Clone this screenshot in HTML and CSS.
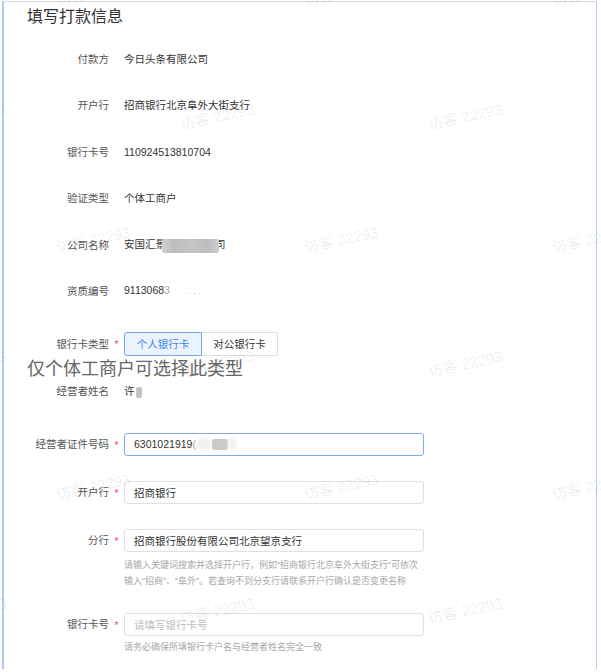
FILE: index.html
```html
<!DOCTYPE html>
<html lang="zh">
<head>
<meta charset="utf-8">
<title>填写打款信息</title>
<link rel="stylesheet" href="styles.css">
</head>
<body>
<div class="frame">
  <h1 class="title">填写打款信息</h1>
  <div class="info">
    <div class="row"><span class="label">付款方</span><span class="mark"></span><span class="value">今日头条有限公司</span></div>
    <div class="row"><span class="label">开户行</span><span class="mark"></span><span class="value">招商银行北京阜外大街支行</span></div>
    <div class="row"><span class="label">银行卡号</span><span class="mark"></span><span class="value">110924513810704</span></div>
    <div class="row"><span class="label">验证类型</span><span class="mark"></span><span class="value">个体工商户</span></div>
    <div class="row"><span class="label">公司名称</span><span class="mark"></span><span class="value">安国汇景<span class="redact r-company"></span>司</span></div>
    <div class="row"><span class="label">资质编号</span><span class="mark"></span><span class="value">9113068<span class="fade">3</span><span class="dots">. . .</span></span></div>
  </div>
  <div class="row type-row">
    <span class="label">银行卡类型</span><span class="mark">*</span>
    <div class="seg"><span class="seg-btn on">个人银行卡</span><span class="seg-btn off">对公银行卡</span></div>
  </div>
  <div class="tip">仅个体工商户可选择此类型</div>
  <div class="row name-row"><span class="label">经营者姓名</span><span class="mark"></span><span class="value">许<span class="redact r-name"></span></span></div>
  <div class="row field f1"><span class="label">经营者证件号码</span><span class="mark">*</span><div class="input focus">6301021919<span class="fade">(</span><span class="haze"></span><span class="redact r-id"></span><span class="haze small"></span></div></div>
  <div class="row field f2"><span class="label">开户行</span><span class="mark">*</span><div class="input">招商银行</div></div>
  <div class="row field f3"><span class="label">分行</span><span class="mark">*</span><div class="input">招商银行股份有限公司北京望京支行</div></div>
  <div class="row hint-row h1"><span></span><span></span><div class="hint">请输入关键词搜索并选择开户行，例如“招商银行北京阜外大街支行”可依次<br>输入“招商”、“阜外”。若查询不到分支行请联系开户行确认是否变更名称</div></div>
  <div class="row field f4"><span class="label">银行卡号</span><span class="mark">*</span><div class="input"><span class="placeholder">请填写银行卡号</span></div></div>
  <div class="row hint-row h2"><span></span><span></span><div class="hint">请务必确保所填银行卡户名与经营者姓名完全一致</div></div>
</div>
<div class="wm-layer" aria-hidden="true">
  <div class="wm-row"><span class="wm">访客 22293</span><span class="wm">访客 22293</span><span class="wm">访客 22293</span><span class="wm">访客 22293</span></div>
  <div class="wm-row"><span class="wm">访客 22293</span><span class="wm">访客 22293</span><span class="wm">访客 22293</span><span class="wm">访客 22293</span></div>
  <div class="wm-row"><span class="wm">访客 22293</span><span class="wm">访客 22293</span><span class="wm">访客 22293</span><span class="wm">访客 22293</span></div>
  <div class="wm-row"><span class="wm">访客 22293</span><span class="wm">访客 22293</span><span class="wm">访客 22293</span><span class="wm">访客 22293</span></div>
  <div class="wm-row"><span class="wm">访客 22293</span><span class="wm">访客 22293</span><span class="wm">访客 22293</span><span class="wm">访客 22293</span></div>
  <div class="wm-row"><span class="wm">访客 22293</span><span class="wm">访客 22293</span><span class="wm">访客 22293</span><span class="wm">访客 22293</span></div>
</div>
</body>
</html>
```
FILE: styles.css
```css
html, body {
  margin: 0;
  padding: 0;
}
body {
  width: 601px;
  height: 672px;
  overflow: hidden;
  position: relative;
  background: #fff;
  font-family: "Liberation Sans", "Noto Sans CJK SC", sans-serif;
  color: #333;
}
.frame {
  box-sizing: border-box;
  margin: 1px 0 0 2px;
  width: 595px;
  height: 668px;
  border-top: 1px solid #d9d9d9;
  border-left: 2px solid #b6c9fb;
  border-right: 1px solid #b6c9fb;
}
.title {
  margin: 3px 0 0;
  padding-left: 23px;
  font-size: 16px;
  line-height: 24px;
  font-weight: normal;
  color: #333;
}
.info {
  margin-top: 6.8px;
}
.row {
  display: grid;
  grid-template-columns: 105px 15px 300px;
  align-items: center;
}
.info .row {
  height: 46.4px;
}
.label {
  text-align: right;
  font-size: 10.5px;
  line-height: 16px;
  color: #555;
  white-space: nowrap;
}
.mark {
  text-align: center;
  color: #f0454a;
  font-size: 10px;
  line-height: 10px;
  padding-top: 3px;
}
.value {
  font-size: 10.5px;
  line-height: 16px;
  color: #333;
  white-space: nowrap;
}
.redact {
  display: inline-block;
  position: relative;
  vertical-align: middle;
  background: #c4c4c4;
  border-radius: 2px;
  filter: blur(0.6px);
}
.r-company {
  width: 57px;
  height: 14px;
  margin-left: -4px;
  margin-right: -4px;
  background: linear-gradient(90deg, #d2d2d2, #bcbcbc 20%, #c6c6c6 50%, #bcbcbc 80%, #d0d0d0);
}
.r-name {
  width: 6px;
  height: 11px;
  margin-left: 1px;
}
.r-id {
  width: 16px;
  height: 11px;
  background: #cacaca;
}
.fade {
  opacity: 0.45;
}
.dots {
  color: #bbb;
  margin-left: 18px;
  font-size: 9px;
}
.haze {
  display: inline-block;
  width: 16px;
  height: 12px;
  vertical-align: middle;
  background: #f1f1f1;
  border-radius: 6px;
  filter: blur(1.5px);
}
.haze.small {
  width: 8px;
}
.type-row {
  margin-top: 17.8px;
  height: 24px;
}
.seg {
  display: flex;
}
.seg-btn {
  box-sizing: border-box;
  height: 24px;
  border: 1px solid #dedede;
  font-size: 10.5px;
  display: flex;
  align-items: center;
  justify-content: center;
  color: #333;
  background: #fff;
  white-space: nowrap;
}
.seg-btn.on {
  width: 78px;
  border-color: #74a6f3;
  background: #ebf3fe;
  color: #3d86ee;
  border-radius: 3px 0 0 3px;
}
.seg-btn.off {
  width: 76px;
  border-left: none;
  border-radius: 0 3px 3px 0;
}
.tip {
  margin-top: 2px;
  padding-left: 23px;
  font-size: 18px;
  line-height: 22px;
  color: #666;
}
.name-row {
  margin-top: 1px;
  height: 20px;
}
.field {
  height: 23px;
}
.f1 { margin-top: 32px; }
.f2 { margin-top: 25px; }
.f3 { margin-top: 25px; }
.h1 { margin-top: 5px; }
.f4 { margin-top: 24px; }
.h2 { margin-top: 3px; }
.input {
  box-sizing: border-box;
  height: 23px;
  width: 300px;
  border: 1px solid #e0e0e0;
  border-radius: 3px;
  padding-left: 9px;
  font-size: 10.5px;
  display: flex;
  align-items: center;
  color: #333;
  white-space: nowrap;
  background: #fff;
}
.input.focus {
  border-color: #7eaaf2;
}
.placeholder {
  color: #bdbdbd;
}
.hint {
  font-size: 9px;
  line-height: 16px;
  color: #a8a8a8;
  white-space: nowrap;
}
.wm-layer {
  position: absolute;
  left: -31px;
  top: -70px;
  display: flex;
  flex-direction: column;
  pointer-events: none;
}
.wm-row {
  display: flex;
  height: 123.5px;
}
.wm-row:nth-child(even) {
  margin-left: -124px;
}
.wm {
  flex: none;
  width: 248px;
  display: flex;
  align-items: center;
  justify-content: center;
  font-family: "Liberation Sans", "Noto Sans CJK SC", sans-serif;
  font-size: 15px;
  color: rgba(0, 0, 0, 0.075);
  transform: rotate(-12deg);
  white-space: nowrap;
}
```
